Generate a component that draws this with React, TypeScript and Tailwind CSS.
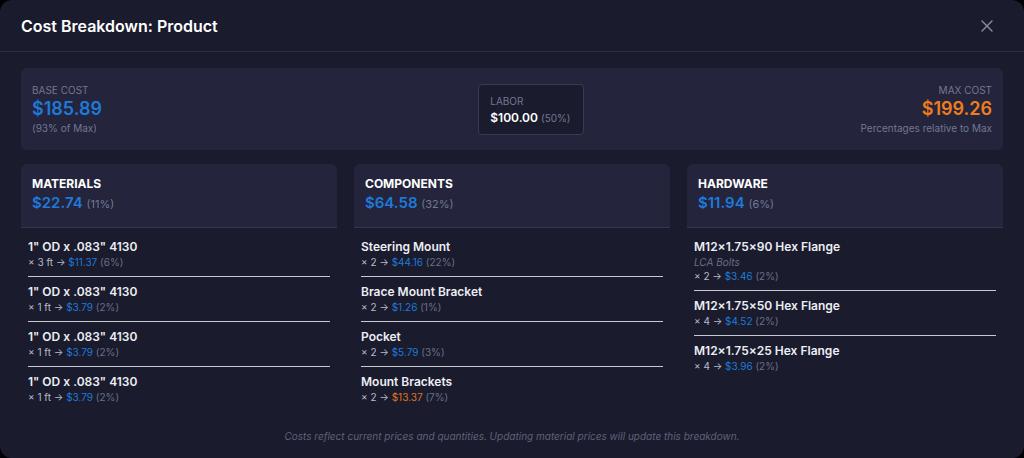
import React from "react";

type Item = { name: string; note?: string; qty: string; price: string; pct: string; orange?: boolean };

const cols: { title: string; total: string; pct: string; items: Item[] }[] = [
  {
    title: "MATERIALS", total: "$22.74", pct: "(11%)",
    items: [
      { name: '1" OD x .083" 4130', qty: "× 3 ft", price: "$11.37", pct: "(6%)" },
      { name: '1" OD x .083" 4130', qty: "× 1 ft", price: "$3.79", pct: "(2%)" },
      { name: '1" OD x .083" 4130', qty: "× 1 ft", price: "$3.79", pct: "(2%)" },
      { name: '1" OD x .083" 4130', qty: "× 1 ft", price: "$3.79", pct: "(2%)" },
    ],
  },
  {
    title: "COMPONENTS", total: "$64.58", pct: "(32%)",
    items: [
      { name: "Steering Mount", qty: "× 2", price: "$44.16", pct: "(22%)" },
      { name: "Brace Mount Bracket", qty: "× 2", price: "$1.26", pct: "(1%)" },
      { name: "Pocket", qty: "× 2", price: "$5.79", pct: "(3%)" },
      { name: "Mount Brackets", qty: "× 2", price: "$13.37", pct: "(7%)", orange: true },
    ],
  },
  {
    title: "HARDWARE", total: "$11.94", pct: "(6%)",
    items: [
      { name: "M12×1.75×90 Hex Flange", note: "LCA Bolts", qty: "× 4".replace("4", "2"), price: "$3.46", pct: "(2%)" },
      { name: "M12×1.75×50 Hex Flange", qty: "× 4", price: "$4.52", pct: "(2%)" },
      { name: "M12×1.75×25 Hex Flange", qty: "× 4", price: "$3.96", pct: "(2%)" },
    ],
  },
];

export default function App() {
  return (
    <div className="w-[1024px] h-[458px] bg-black" style={{ fontFamily: "Inter, 'Noto Sans', sans-serif" }}>
      <div className="h-full bg-[#1a1b2d] rounded-[12px] flex flex-col overflow-hidden">
        <div className="h-[52px] border-b border-[#2c3047] flex items-center justify-between px-[21px] shrink-0">
          <div className="text-[16px] font-semibold text-white">Cost Breakdown: Product</div>
          <svg width="12" height="12" viewBox="0 0 12 12" className="mr-[10px]" stroke="#8a8fa3" strokeWidth="1.4" strokeLinecap="round">
            <path d="M1 1L11 11M11 1L1 11" />
          </svg>
        </div>
        <div className="px-[21px] pt-[16px] flex flex-col">
          <div className="h-[82px] bg-[#24243d] rounded-[6px] flex items-center justify-between px-[11px]">
            <div className="flex flex-col">
              <div className="text-[10px] text-[#727891] leading-[14px]">BASE COST</div>
              <div className="text-[18px] font-semibold text-[#1e7ad9] leading-[24px]">$185.89</div>
              <div className="text-[10px] text-[#727891] leading-[14px]">(93% of Max)</div>
            </div>
            <div className="bg-[#1a1b2d] border border-[#373a52] rounded-[4px] w-[106px] h-[51px] px-[11px] pt-[9px] flex flex-col ml-[100px]">
              <div className="text-[10px] text-[#727891] leading-[14px]">LABOR</div>
              <div className="text-[12px] text-white font-semibold leading-[20px]">$100.00 <span className="text-[10px] font-normal text-[#727891]">(50%)</span></div>
            </div>
            <div className="flex flex-col items-end">
              <div className="text-[10px] text-[#727891] leading-[14px]">MAX COST</div>
              <div className="text-[18px] font-semibold text-[#f07d1c] leading-[24px]">$199.26</div>
              <div className="text-[10px] text-[#727891] leading-[14px]">Percentages relative to Max</div>
            </div>
          </div>
          <div className="grid grid-cols-3 gap-[17px] mt-[14px]">
            {cols.map((c) => (
              <div key={c.title} className="flex flex-col">
                <div className="h-[64px] bg-[#24243d] rounded-t-[6px] border-b border-[#33364d] px-[11px] pt-[12px]">
                  <div className="text-[12px] font-bold text-white leading-[16px]">{c.title}</div>
                  <div className="text-[15px] font-semibold text-[#1e7ad9] leading-[22px]">
                    {c.total} <span className="text-[11px] font-normal text-[#727891]">{c.pct}</span>
                  </div>
                </div>
                <div className="px-[7px] pt-[11px]">
                  {c.items.map((it, i) => (
                    <div key={i} className={`pb-[7px] mb-[7px] ${i < c.items.length - 1 ? "border-b border-[#c8cad3]" : ""}`}>
                      <div className="text-[12px] font-semibold text-[#eceef4] leading-[16px]">{it.name}</div>
                      {it.note && <div className="text-[10px] italic text-[#6a7088] leading-[14px]">{it.note}</div>}
                      <div className="text-[10px] text-[#b8bccb] leading-[14px]">
                        {it.qty} → <span className={it.orange ? "text-[#e0731b]" : "text-[#1e7ad9]"}>{it.price}</span>{" "}
                        <span className="text-[#6a7088]">{it.pct}</span>
                      </div>
                    </div>
                  ))}
                </div>
              </div>
            ))}
          </div>
        </div>
        <div className="mt-auto mb-[14px] text-center text-[10px] italic text-[#5d6379]">
          Costs reflect current prices and quantities. Updating material prices will update this breakdown.
        </div>
      </div>
    </div>
  );
}
